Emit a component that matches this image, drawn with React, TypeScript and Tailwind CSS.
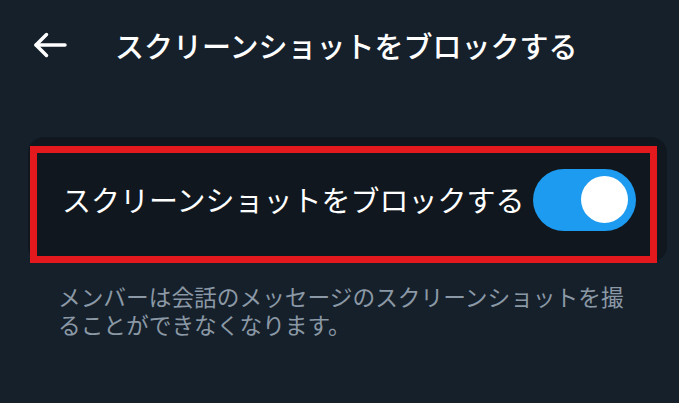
export default function App() {
  return (
    <div
      className="w-[679px] h-[403px] overflow-hidden bg-[#15202b]"
      style={{ fontFamily: '"Noto Sans CJK JP", "Noto Sans", sans-serif' }}
    >
      {/* header */}
      <div className="flex items-center h-[90px] pl-[33px]">
        <svg width="34" height="26" viewBox="0 0 34 26" fill="none" stroke="white" strokeWidth="3.5" strokeLinecap="round" strokeLinejoin="round">
          <path d="M32 13H3" />
          <path d="M13.5 2.5 3 13l10.5 10.5" />
        </svg>
        <h1 className="ml-[48px] text-[29px] font-medium text-white leading-none">スクリーンショットをブロックする</h1>
      </div>

      {/* setting card */}
      <div className="ml-[28px] mr-[12px] mt-[47px]">
        <div className="relative h-[125px] rounded-2xl bg-[#10171e] flex items-center justify-between pl-[34px] pr-[31px]">
          <span className="text-[29px] text-white leading-none">スクリーンショットをブロックする</span>
          <div className="w-[103px] h-[62px] rounded-full bg-[#1d9bf0] flex items-center justify-end pr-[8px]">
            <div className="w-[47px] h-[47px] rounded-full bg-white" />
          </div>
          <div className="absolute left-[2px] top-[9px] w-[627px] h-[117px] border-[7px] border-[#e3191d]" />
        </div>
      </div>

      <p className="ml-[58px] mt-[21px] w-[580px] text-[22.7px] leading-[28px] text-[#8b98a5]">
        メンバーは会話のメッセージのスクリーンショットを撮ることができなくなります。
      </p>
    </div>
  );
}
